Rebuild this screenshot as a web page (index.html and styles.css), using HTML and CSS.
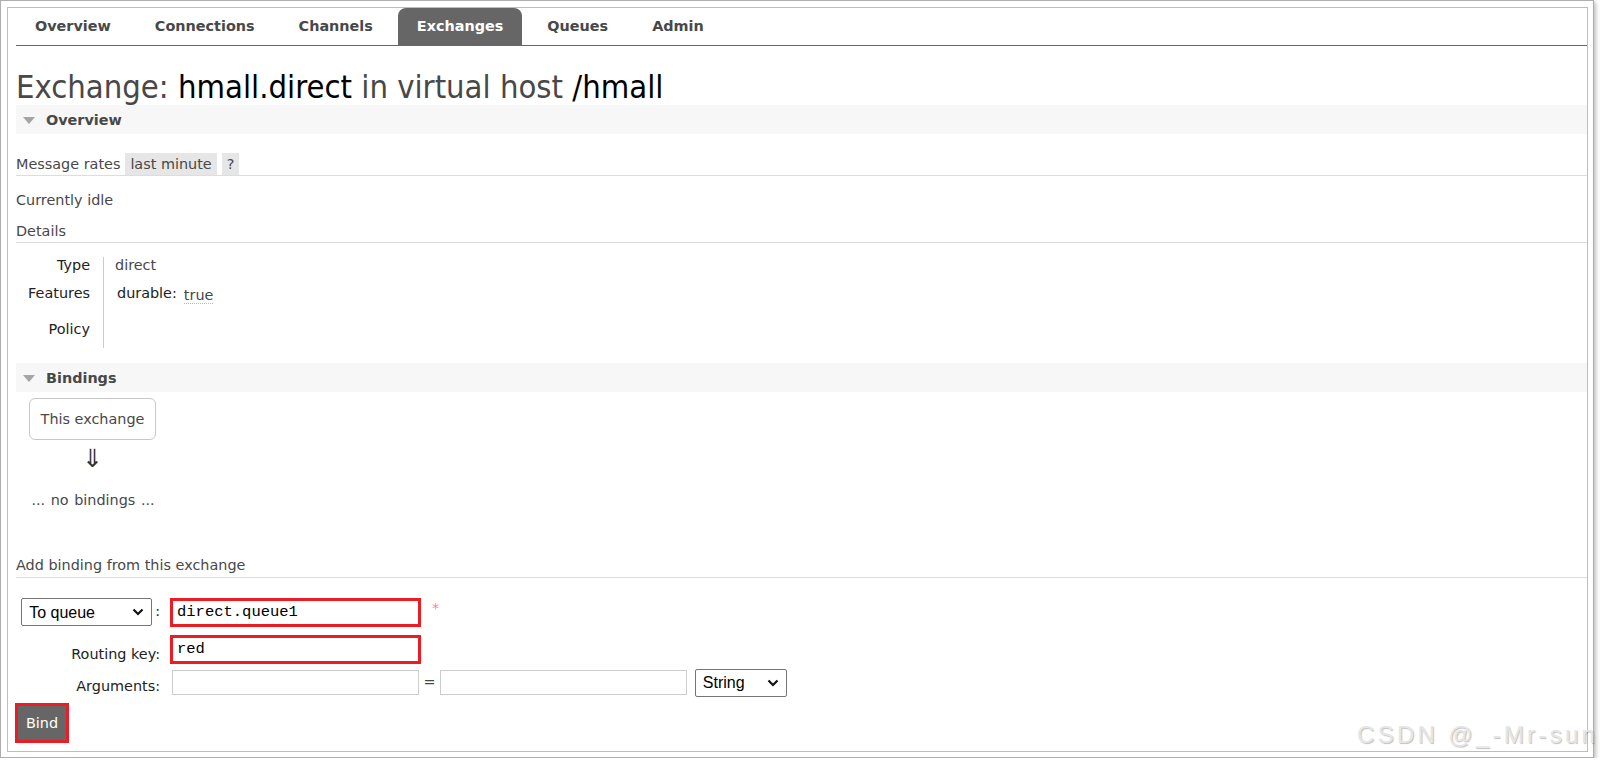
FILE: index.html
```html
<!DOCTYPE html>
<html lang="en">
    <head>
        <meta charset="UTF-8">
        <title>Exchange: hmall.direct</title>
        <link rel="stylesheet" href="styles.css">
    </head>
    <body>
        <div class="frame">
            <div class="page">
                <ul class="tabs">
                    <li><a href="#">Overview</a></li>
                    <li><a href="#">Connections</a></li>
                    <li><a href="#">Channels</a></li>
                    <li class="active"><a href="#">Exchanges</a></li>
                    <li><a href="#">Queues</a></li>
                    <li><a href="#">Admin</a></li>
                </ul>

                <h1>Exchange: <b>hmall.direct</b> in virtual host <b>/hmall</b></h1>

                <h2 class="section-head"><span class="tri"></span>Overview</h2>
                <div class="rates">
                    <span>Message rates</span>
                    <span class="pill">last minute</span>
                    <span class="pill">?</span>
                </div>
                <p class="idle">Currently idle</p>
                <h3 class="sub">Details</h3>
                <table class="facts">
                    <tr class="r1">
                        <th>Type</th>
                        <td>direct</td>
                    </tr>
                    <tr class="r2">
                        <th>Features</th>
                        <td><span class="key">durable:</span><span class="val">true</span></td>
                    </tr>
                    <tr class="r3">
                        <th>Policy</th>
                        <td></td>
                    </tr>
                </table>

                <h2 class="section-head bindings-head"><span class="tri"></span>Bindings</h2>
                <div class="flow">
                    <div class="node">This exchange</div>
                    <div class="arrow">&#8659;</div>
                    <p class="none">... no bindings ...</p>
                </div>

                <h3 class="sub add">Add binding from this exchange</h3>
                <form class="bind-form">
                    <table class="form">
                        <tr class="f1">
                            <th><select class="dest"><option>To queue</option><option>To exchange</option></select><span class="colon">:</span></th>
                            <td><input class="hl" type="text" value="direct.queue1"><span class="mand">*</span></td>
                        </tr>
                        <tr class="f2">
                            <th><label>Routing key:</label></th>
                            <td><input class="hl" type="text" value="red"></td>
                        </tr>
                        <tr class="f3">
                            <th><label>Arguments:</label></th>
                            <td><input type="text"> = <input type="text"> <select class="kind"><option>String</option><option>Number</option><option>Boolean</option></select></td>
                        </tr>
                    </table>
                    <button type="button" class="bind">Bind</button>
                </form>
            </div>
            <div class="watermark">CSDN @_-Mr-sun</div>
        </div>
    </body>
</html>
```

FILE: styles.css
```css
body {
    margin: 0;
    background: #fff;
    font-family: "DejaVu Sans", Verdana, sans-serif;
    font-size: 14.4px;
    line-height: 20px;
    color: #484848;
}
.frame {
    position: relative;
    width: 1594px;
    height: 758px;
    box-sizing: border-box;
    border: 1px solid #aeaeae;
    padding: 6px 5px 5px 6px;
    box-shadow: 2px 2px 4px rgba(0, 0, 0, 0.25);
}
.page {
    height: 100%;
    box-sizing: border-box;
    border: 1px solid #bdbdbd;
    padding: 0 0 0 8px;
    overflow: hidden;
}

/* top menu */
.tabs {
    display: flex;
    gap: 6px;
    height: 37px;
    margin: 0;
    padding: 0;
    list-style: none;
    border-bottom: 1px solid #666;
}
.tabs a {
    display: block;
    padding: 0 19px;
    line-height: 37px;
    font-weight: bold;
    color: #484848;
    text-decoration: none;
}
.tabs .active a {
    background: #666;
    color: #fff;
    border-radius: 8px 8px 0 0;
}

h1 {
    margin: 24px 0 0;
    font-size: 32.5px;
    font-stretch: condensed;
    font-weight: normal;
    line-height: 35px;
    color: #484848;
}
h1 b {
    font-weight: normal;
    color: #000;
}

.section-head {
    display: flex;
    align-items: center;
    height: 29px;
    margin: 0;
    background: #f7f7f7;
    font-size: 14.4px;
    font-weight: bold;
}
.tri {
    width: 0;
    height: 0;
    margin: 1px 11px 0 7px;
    border-left: 6px solid transparent;
    border-right: 6px solid transparent;
    border-top: 7px solid #a5a5a5;
}

.rates {
    display: flex;
    align-items: center;
    height: 22px;
    margin-top: 19px;
    border-bottom: 1px solid #ddd;
}
.pill {
    margin-left: 5px;
    padding: 0 5px;
    line-height: 22px;
    background: #e6e6e6;
}
.pill:first-of-type {
    margin-left: 6px;
}

.idle {
    margin: 14px 0 0;
}
.sub {
    margin: 11px 0 0;
    padding-bottom: 1px;
    font-size: 14.4px;
    font-weight: normal;
    border-bottom: 1px solid #ddd;
}

.facts {
    margin-top: 14px;
    border-collapse: collapse;
}
.facts th,
.facts td {
    padding: 0;
    line-height: 16px;
    vertical-align: top;
}
.facts th {
    width: 74px;
    padding-right: 13px;
    font-weight: normal;
    text-align: right;
    color: #222;
}
.facts td {
    padding-left: 11px;
    border-left: 1px solid #ccc;
}
.facts .r1 { height: 28px; }
.facts .r2 { height: 36px; }
.facts .r3 { height: 27px; }
.facts .key {
    margin-left: 2px;
    color: #222;
}
.facts .val {
    margin-left: 7px;
    position: relative;
    top: 2px;
    border-bottom: 1px dotted #bbb;
}

.bindings-head {
    margin-top: 15px;
}
.flow {
    width: 127px;
    margin-left: 13px;
    text-align: center;
}
.node {
    margin-top: 6px;
    height: 40px;
    line-height: 40px;
    border: 1px solid #c8c8c8;
    border-radius: 6px;
}
.arrow {
    font-size: 25px;
    line-height: 38px;
    color: #333;
}
.none {
    width: 140px;
    margin: 12px 0 0 -6px;
    word-spacing: 1px;
}

.add {
    margin-top: 45px;
    padding-bottom: 2px;
}

/* binding form */
.form {
    margin-top: 16px;
    border-collapse: collapse;
}
.form th,
.form td {
    padding: 0;
    vertical-align: middle;
}
.form th {
    width: 144px;
    font-weight: normal;
    text-align: right;
    color: #222;
}
.form td {
    padding-left: 12px;
}
.form .f1 { height: 36px; }
.form .f2 { height: 38px; }
.form .f3 { height: 29px; }
.form .f2 th {
    padding-top: 10px;
}
.form .f3 th {
    padding-top: 6px;
}
.colon {
    margin-left: 3px;
}
.form input {
    width: 247px;
    height: 25px;
    box-sizing: border-box;
    padding: 0 4px;
    border: 1px solid #ccc;
    font-family: "Liberation Mono", "Courier New", monospace;
    font-size: 15.5px;
    color: #000;
    vertical-align: middle;
}
.form input.hl {
    border-color: #ec1c24;
    box-shadow: 0 0 0 2px #ec1c24;
}
.form select {
    appearance: none;
    height: 28px;
    padding: 0 0 0 7px;
    border: 1px solid #767676;
    border-radius: 2px;
    background: #fff url("data:image/svg+xml,%3Csvg xmlns='http://www.w3.org/2000/svg' width='12' height='8' viewBox='0 0 12 8'%3E%3Cpath d='M1.5 1.5 L6 6 L10.5 1.5' fill='none' stroke='%23111' stroke-width='2.2'/%3E%3C/svg%3E") no-repeat right 7px center;
    font-family: "Liberation Sans", Arial, sans-serif;
    font-size: 16px;
    color: #000;
    vertical-align: middle;
}
.dest {
    width: 131px;
}
.kind {
    width: 92px;
    height: 27px;
    margin-left: 3px;
}
.mand {
    margin-left: 13px;
    position: relative;
    top: -3px;
    color: #f28b8b;
}
.bind {
    display: block;
    margin: 9px 0 0 2px;
    height: 34px;
    padding: 0 8px;
    border: none;
    background: #666;
    color: #fff;
    font-family: "DejaVu Sans", Verdana, sans-serif;
    font-size: 14.4px;
    box-shadow: 0 0 0 3px #ec1c24;
}

.watermark {
    position: absolute;
    left: 1356px;
    top: 722px;
    font-family: "Liberation Sans", Arial, sans-serif;
    font-size: 24px;
    line-height: 24px;
    letter-spacing: 3.3px;
    white-space: nowrap;
    color: #e6e6e6;
    text-shadow: 1px 1px 1px rgba(0, 0, 0, 0.25);
}
```
